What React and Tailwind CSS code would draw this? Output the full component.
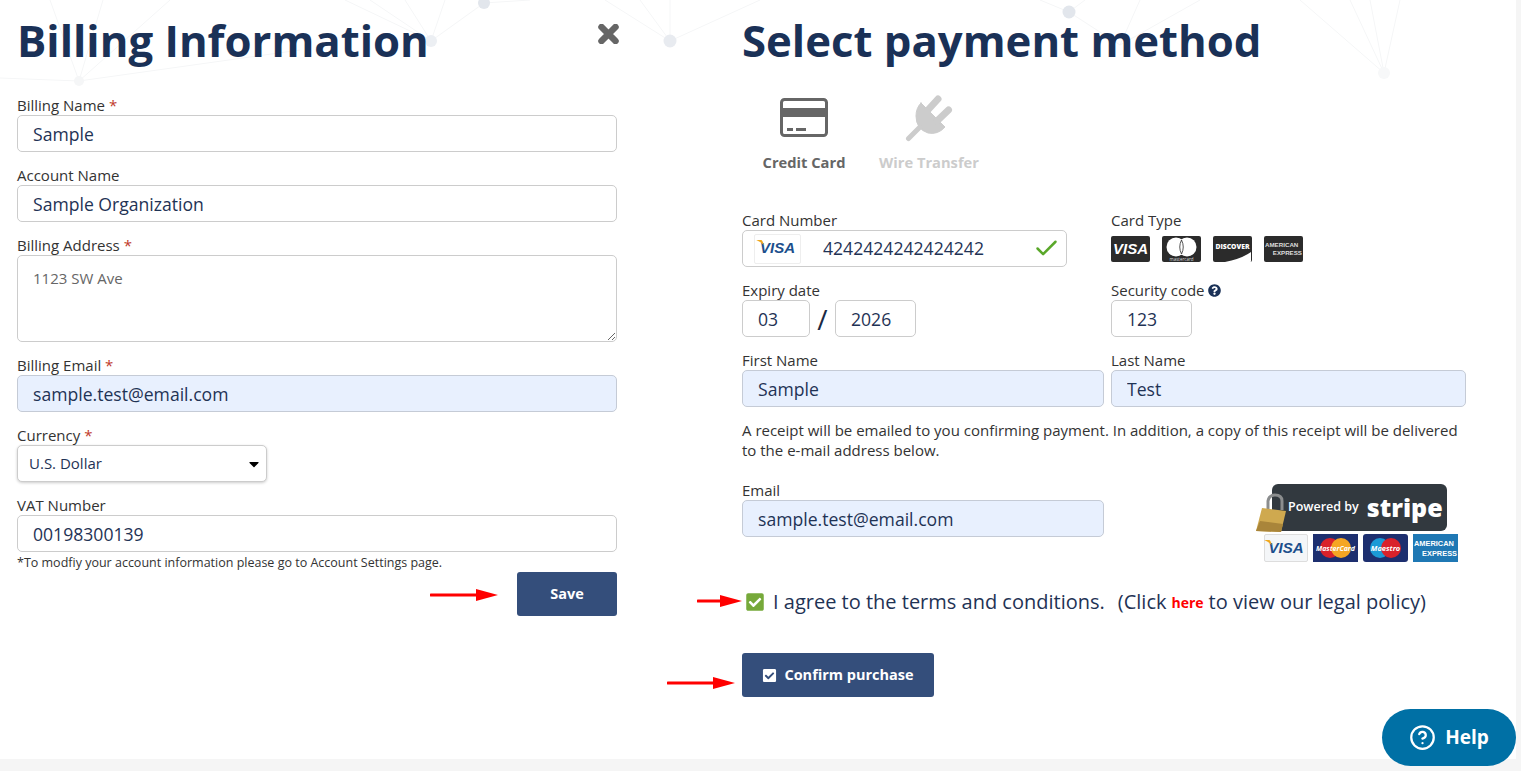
import { FaCheckSquare, FaQuestionCircle, FaCaretDown } from "react-icons/fa";
import { Check, CircleHelp } from "lucide-react";

const inputClass =
  "block w-full h-[37px] rounded-[5px] border border-[#ccc] bg-white px-[15px] text-[17.6px] text-[#1f3355] outline-none";
const filledClass =
  "block w-full h-[37px] rounded-[5px] border border-[#c5cbd6] bg-[#e8f0fe] px-[15px] text-[17.6px] text-[#1f3355] outline-none";

const Label = ({ children, required }) => (
  <label className="block h-[20px] text-[15px] leading-[20px] text-[#333]">
    {children}
    {required && <span className="text-[#c0392b]"> *</span>}
  </label>
);

const Field = ({ label, required, value, filled }) => (
  <div className="mb-[13px]">
    <Label required={required}>{label}</Label>
    <input readOnly value={value} className={filled ? filledClass : inputClass} />
  </div>
);

// background network, only a faint decoration at the top of the page
const Network = () => (
  <svg className="absolute left-0 top-0" width="1516" height="110" fill="none">
    <g stroke="#f5f6f7" strokeWidth="1">
      <path d="M79 81 L50 0 M79 81 L103 0 M79 81 L170 0 M431 41 L370 0 M431 41 L345 0 M431 41 L405 0 M431 41 L445 0 M431 41 L484 3 M484 3 L530 0" />
      <path d="M670 41 L605 0 M670 41 L640 0 M670 41 L670 0 M670 41 L760 0 M1069 12 L1040 0 M1069 12 L1085 0 M1069 12 L1120 45 M1384 73 L1300 0 M1384 73 L1350 0 M1384 73 L1400 0 M1384 73 L1370 0" />
      <path d="M79 81 L0 78 M79 81 L300 50 M1120 45 L1140 0 M1120 45 L1200 0" />
    </g>
    <circle cx="484" cy="3" r="6" fill="#e2e6ec" />
    <circle cx="431" cy="41" r="6" fill="#eceff3" />
    <circle cx="670" cy="41" r="6.5" fill="#e8ebf0" />
    <circle cx="1069" cy="12" r="6.5" fill="#e2e6ec" />
    <circle cx="79" cy="81" r="5" fill="#f5f6f7" />
    <circle cx="1384" cy="73" r="6" fill="#f7f8f9" />
  </svg>
);

const RedArrow = ({ className, width = 68 }) => (
  <svg className={`absolute ${className}`} width={width} height="14" viewBox={`0 0 ${width} 14`}>
    <path d={`M1 7 L${width - 20} 7`} stroke="#f00" strokeWidth="3" strokeLinecap="round" />
    <path d={`M${width - 22} 1 L${width} 7 L${width - 22} 13 Z`} fill="#f00" />
  </svg>
);

const CardIcon = () => (
  <svg width="48" height="39" viewBox="0 0 48 39">
    <rect x="1.5" y="1.5" width="45" height="36" rx="3" fill="white" stroke="#666" strokeWidth="3" />
    <rect x="2" y="10" width="44" height="9" fill="#666" />
    <rect x="7" y="30" width="6" height="3" fill="#666" />
    <rect x="16" y="30" width="10" height="3" fill="#666" />
  </svg>
);

const PlugIcon = () => (
  <svg width="48" height="48" viewBox="0 0 48 48" fill="#ccc" stroke="#ccc" strokeLinecap="round">
    <path d="M16 8 L40 32 Q33 40 23 38 Q11 34 11 21 Q11 13 16 8 Z" strokeWidth="1" />
    <path d="M22 16 L33 4 M32 26 L43.5 15" strokeWidth="7" fill="none" />
    <path d="M15 32 L3.5 43.5" strokeWidth="5" fill="none" />
  </svg>
);

const CloseIcon = () => (
  <svg width="21" height="20" viewBox="0 0 21 20">
    <path d="M3.5 3 L17.5 17 M17.5 3 L3.5 17" stroke="#666" strokeWidth="6.5" strokeLinecap="round" />
  </svg>
);

const DarkCard = ({ children }) => (
  <div className="flex h-[26px] w-[39px] items-center justify-center overflow-hidden rounded-[2px] bg-[#2b2b2b]">
    {children}
  </div>
);

const CardTypes = () => (
  <div className="flex h-[37px] items-start gap-[12px] pt-[6px]">
    <DarkCard>
      <span className="font-['Liberation_Sans'] text-[15px] font-bold italic text-white">VISA</span>
    </DarkCard>
    <DarkCard>
      <svg width="39" height="26" viewBox="0 0 39 26">
        <circle cx="14" cy="11" r="9.5" fill="#fff" />
        <circle cx="25" cy="11" r="9.5" fill="#fff" />
        <path d="M19.5 4 Q16 11 19.5 18 Q23 11 19.5 4" fill="none" stroke="#2b2b2b" strokeWidth="0.8" />
        <text x="19.5" y="24.5" fontSize="4.5" fill="#ddd" textAnchor="middle" fontFamily="Open Sans">mastercard</text>
      </svg>
    </DarkCard>
    <DarkCard>
      <svg width="39" height="26" viewBox="0 0 39 26">
        <path d="M12 26 Q28 23 38 16 L38 26 Z" fill="#fff" />
        <text x="19.5" y="13" fontSize="6.8" fontWeight="800" fill="#fff" textAnchor="middle" fontFamily="Open Sans">DISCOVER</text>
      </svg>
    </DarkCard>
    <DarkCard>
      <svg width="39" height="26" viewBox="0 0 39 26">
        <text x="1" y="11" fontSize="6.2" fontWeight="700" fill="#ddd" fontFamily="Liberation Sans">AMERICAN</text>
        <text x="38" y="19" fontSize="6.2" fontWeight="700" fill="#ddd" textAnchor="end" fontFamily="Liberation Sans">EXPRESS</text>
      </svg>
    </DarkCard>
  </div>
);

const VisaMark = ({ size = 15 }) => (
  <span className="relative font-['Liberation_Sans'] font-bold italic text-[#1c4f8c]" style={{ fontSize: size }}>
    VISA
    <svg className="absolute left-[-4px] top-[3px]" width="8" height="5" viewBox="0 0 9 6">
      <path d="M0 0 L6 0 Q8 1 9 6 Q5 2 0 0 Z" fill="#f0a81e" />
    </svg>
  </span>
);

const Stripe = () => (
  <div className="relative mr-[9px] mt-[4px] h-[78px] w-[202px]">
    <div className="absolute right-[10px] top-0 flex h-[47px] w-[175px] items-center whitespace-nowrap rounded-[6px] bg-[#32393f] pl-[16px] text-white">
      <span className="text-[12.5px] font-semibold">Powered by</span>
      <span className="ml-[8px] text-[25px] font-extrabold leading-none">stripe</span>
    </div>
    <svg className="absolute left-0 top-[0px]" width="34" height="50" viewBox="0 0 34 50">
      <path d="M13 26 L13 17 Q14 11 20 11 Q27 11 27 17 L27 26" fill="none" stroke="#8b8d8e" strokeWidth="3" />
      <path d="M7 24 L31 27 L26 48 L1 47 Z" fill="#cfa94f" />
      <path d="M5 37 L28 40 L26 48 L1 47 Z" fill="#a9853a" />
    </svg>
    <div className="absolute bottom-0 left-[9px] flex h-[28px] items-stretch gap-[5px]">
      <div className="flex w-[44px] items-center justify-center rounded-[2px] border border-[#ddd] bg-[#f4f6f8]">
        <VisaMark size={15} />
      </div>
      <div className="w-[45px]">
        <svg width="45" height="28" viewBox="0 0 45 28">
          <rect width="45" height="28" fill="#1d2f6f" />
          <circle cx="17" cy="14" r="10" fill="#d9222a" />
          <circle cx="28" cy="14" r="10" fill="#f5a623" />
          <text x="22.5" y="16.5" fontSize="7" fontWeight="700" fontStyle="italic" fill="#fff" textAnchor="middle" fontFamily="Open Sans">MasterCard</text>
        </svg>
      </div>
      <div className="w-[45px]">
        <svg width="45" height="28" viewBox="0 0 45 28">
          <rect width="45" height="28" rx="3" fill="#1d2f6f" />
          <circle cx="17" cy="14" r="10" fill="#1b9ad6" />
          <circle cx="28" cy="14" r="10" fill="#d9222a" />
          <text x="22.5" y="16.5" fontSize="7.5" fontWeight="700" fontStyle="italic" fill="#fff" textAnchor="middle" fontFamily="Open Sans">Maestro</text>
        </svg>
      </div>
      <div className="w-[45px]">
        <svg width="45" height="28" viewBox="0 0 45 28">
          <rect width="45" height="28" fill="#1f78b4" />
          <text x="1" y="12" fontSize="7.4" fontWeight="700" fill="#fff" fontFamily="Liberation Sans">AMERICAN</text>
          <text x="44" y="22" fontSize="7.4" fontWeight="700" fill="#fff" textAnchor="end" fontFamily="Liberation Sans">EXPRESS</text>
        </svg>
      </div>
    </div>
  </div>
);

const App = () => {
  return (
    <div className="relative h-[771px] w-full overflow-hidden bg-[#f5f5f5] font-['Open_Sans',sans-serif] text-[#333]">
      <div className="relative flex h-[759px] w-[1516px] bg-white">
        <Network />

        {/* billing column */}
        <section className="relative ml-[17px] w-[600px] pt-[13px]">
          <h1 className="h-[82px] text-[43.7px] font-bold leading-[54px] text-[#1a3157]">Billing Information</h1>
          <div className="absolute right-[-2px] top-[24px]">
            <CloseIcon />
          </div>

          <Field label="Billing Name" required value="Sample" />
          <Field label="Account Name" value="Sample Organization" />

          <div className="mb-[13px]">
            <Label required>Billing Address</Label>
            <textarea
              readOnly
              value="1123 SW Ave"
              className="block h-[87px] w-full rounded-[5px] border border-[#ccc] bg-white px-[15px] py-[12px] text-[15px] leading-[20px] text-[#666] outline-none"
            />
          </div>

          <Field label="Billing Email" required value="sample.test@email.com" filled />

          <div className="mb-[13px]">
            <Label required>Currency</Label>
            <div className="flex h-[37px] w-[250px] items-center justify-between rounded-[5px] border border-[#ccc] bg-white pl-[11px] pr-[4px] text-[15px] text-[#1f3355] shadow-[0_1px_3px_rgba(0,0,0,0.2)]">
              <span>U.S. Dollar</span>
              <FaCaretDown className="text-[16px] text-black" />
            </div>
          </div>

          <Label>VAT Number</Label>
          <input readOnly value="00198300139" className={inputClass} />
          <p className="mt-[2px] h-[18px] text-[12.5px] leading-[18px] text-[#333]">
            *To modfiy your account information please go to Account Settings page.
          </p>

          <div className="flex justify-end">
            <button className="h-[44px] w-[100px] rounded-[3px] bg-[#344e7b] text-[14.5px] font-bold text-white">Save</button>
          </div>
          <RedArrow className="left-[413px] top-[588px]" />
        </section>

        {/* payment column */}
        <section className="relative ml-[125px] w-[724px] pt-[13px]">
          <h1 className="h-[69px] text-[43.7px] font-bold leading-[54px] text-[#1a3157]">Select payment method</h1>

          <div className="flex h-[128px] items-start">
            <div className="flex w-[103px] flex-col items-center pl-[21px]">
              <div className="flex h-[69px] items-center pt-[1px]">
                <CardIcon />
              </div>
              <span className="whitespace-nowrap text-[14.7px] font-bold text-[#666]">Credit Card</span>
            </div>
            <div className="ml-[34px] flex w-[100px] flex-col items-center">
              <div className="flex h-[69px] items-center pt-[4px]">
                <PlugIcon />
              </div>
              <span className="whitespace-nowrap text-[14.7px] font-bold text-[#ccc]">Wire Transfer</span>
            </div>
          </div>

          <div className="flex gap-[44px] pb-[13px]">
            <div className="w-[325px]">
              <Label>Card Number</Label>
              <div className="flex h-[37px] items-center rounded-[5px] border border-[#ccc] bg-white pl-[11px] pr-[6px] text-[17.6px] text-[#1f3355]">
                <div className="flex h-[30px] w-[47px] items-center justify-center rounded-[2px] border border-[#eee]">
                  <VisaMark size={15} />
                </div>
                <span className="ml-[22px] flex-1">4242424242424242</span>
                <Check className="text-[#5aa82a]" size={27} strokeWidth={2.2} />
              </div>
            </div>
            <div>
              <Label>Card Type</Label>
              <CardTypes />
            </div>
          </div>

          <div className="flex gap-[44px] pb-[13px]">
            <div className="flex w-[325px] flex-col">
              <Label>Expiry date</Label>
              <div className="flex items-center">
                <input readOnly value="03" className="h-[37px] w-[68px] rounded-[5px] border border-[#ccc] px-[15px] text-[17.6px] text-[#1f3355] outline-none" />
                <span className="w-[25px] text-center text-[28px] leading-none text-[#1a2a44]">/</span>
                <input readOnly value="2026" className="h-[37px] w-[81px] rounded-[5px] border border-[#ccc] px-[15px] text-[17.6px] text-[#1f3355] outline-none" />
              </div>
            </div>
            <div>
              <label className="flex h-[20px] items-center gap-[3px] text-[15px] leading-[20px] text-[#333]">
                Security code <FaQuestionCircle className="text-[13px] text-[#1a3157]" />
              </label>
              <input readOnly value="123" className="h-[37px] w-[81px] rounded-[5px] border border-[#ccc] px-[15px] text-[17.6px] text-[#1f3355] outline-none" />
            </div>
          </div>

          <div className="flex gap-[7px]">
            <div className="w-[362px]">
              <Label>First Name</Label>
              <input readOnly value="Sample" className={filledClass} />
            </div>
            <div className="w-[355px]">
              <Label>Last Name</Label>
              <input readOnly value="Test" className={filledClass} />
            </div>
          </div>

          <p className="mt-[13px] h-[40px] w-[724px] text-[15px] leading-[20px] text-[#333]">
            A receipt will be emailed to you confirming payment. In addition, a copy of this receipt will be delivered to the e-mail address below.
          </p>

          <div className="mt-[20px] flex items-start justify-between">
            <div className="w-[362px]">
              <Label>Email</Label>
              <input readOnly value="sample.test@email.com" className={filledClass} />
            </div>
            <Stripe />
          </div>

          <div className="ml-[3px] mt-[26px] flex h-[28px] items-center whitespace-nowrap text-[20px] text-[#1f3355]">
            <FaCheckSquare className="text-[20px] text-[#76a93a]" />
            <span className="ml-[8px]">I agree to the terms and conditions.</span>
            <span className="ml-[13px]">(Click</span>
            <span className="mx-[5px] text-[14px] font-bold text-[#f00]">here</span>
            <span>to view our legal policy)</span>
          </div>

          <button className="mt-[37px] flex h-[44px] w-[192px] items-center justify-center gap-[7px] rounded-[3px] bg-[#344e7b] text-[14.5px] font-bold text-white">
            <FaCheckSquare className="text-[15px]" />
            Confirm purchase
          </button>

          <RedArrow className="left-[-45px] top-[594px]" width={45} />
          <RedArrow className="left-[-75px] top-[676px]" />
        </section>
      </div>

      <button className="absolute left-[1382px] top-[709px] flex h-[57px] w-[134px] items-center justify-center gap-[9px] rounded-full bg-[#0070a5] text-[19px] font-bold text-white">
        <CircleHelp size={27} strokeWidth={2} />
        Help
      </button>
    </div>
  );
};

export default App;
